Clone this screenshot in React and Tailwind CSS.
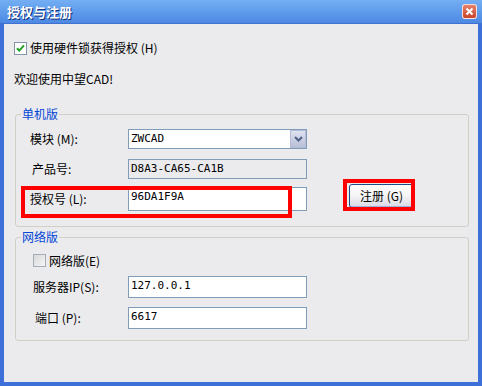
import React from "react";

const cjk = { fontFamily: '"Noto Sans CJK SC", "Noto Sans", sans-serif' };
const mono = { fontFamily: '"DejaVu Sans Mono", "Liberation Mono", "Noto Sans CJK SC", monospace' };

function CheckBox({ checked }) {
  if (checked) {
    return (
      <div className="w-[13px] h-[13px] border border-[#8593a8] bg-white flex items-center justify-center">
        <svg width="11" height="11" viewBox="0 0 11 11">
          <path d="M2 5.2 L4.3 7.6 L9 2.4" stroke="#21a121" strokeWidth="2" fill="none" />
        </svg>
      </div>
    );
  }
  return <div className="w-[13px] h-[13px] border border-[#a7adb8] bg-gradient-to-br from-[#d8d8d8] to-[#f6f6f6]" />;
}

function Field({ value, h, readOnly }) {
  return (
    <div
      className={`w-[179px] border border-[#7f9db9] flex items-start pl-[2px] pt-[3px] text-[11px] leading-[12px] text-black ${readOnly ? "bg-[#ebebee]" : "bg-white"}`}
      style={{ ...mono, height: h }}
    >
      {value}
    </div>
  );
}

export default function App() {
  return (
    <div className="relative w-[482px] h-[386px] bg-[#3d70d8] flex flex-col overflow-hidden" style={cjk}>
      {/* title bar */}
      <div className="h-[24px] flex items-center justify-between bg-gradient-to-b from-[#74aef3] via-[#5f9cec] to-[#4d88e2] border-b border-[#3f72d0]">
        <span className="ml-[7px] text-[13px] font-bold text-white leading-none [text-shadow:1px_1px_0_#10307a]">授权与注册</span>
        <div className="mr-[5px] w-[15px] h-[15px] rounded-[3px] border border-white/80 bg-gradient-to-b from-[#e8806a] to-[#c8442a] flex items-center justify-center">
          <svg width="9" height="9" viewBox="0 0 9 9">
            <path d="M1.5 1.5 L7.5 7.5 M7.5 1.5 L1.5 7.5" stroke="white" strokeWidth="2" />
          </svg>
        </div>
      </div>

      {/* body */}
      <div className="flex-1 mx-[4px] mb-[4px] bg-[#ebebee] flex flex-col text-[12px] leading-[14px] text-black">
        <div className="mt-[17px] ml-[10px] flex items-center gap-[3px]">
          <CheckBox checked />
          <span>使用硬件锁获得授权 (H)</span>
        </div>
        <div className="mt-[17px] ml-[10px]">欢迎使用中望CAD!</div>

        {/* 单机版 */}
        <fieldset className="mt-[21px] ml-[11px] w-[454px] border border-[#d0d0c8] rounded-[3px] pl-[14px] pt-[8px] pb-[15px]">
          <legend className="-ml-[9px] px-[1px] text-[12px] leading-[14px] text-[#0046d5]">单机版</legend>
          <div className="flex items-center h-[20px]">
            <span className="w-[98px]">模块 (M):</span>
            <div className="w-[179px] h-[20px] border border-[#7f9db9] bg-white flex items-center justify-between">
              <span className="pl-[2px] text-[11px]" style={mono}>ZWCAD</span>
              <div className="w-[16px] h-[18px] bg-gradient-to-b from-[#dfe2f0] to-[#b9bfd8] border border-[#b5bcd6] flex items-center justify-center">
                <svg width="9" height="6" viewBox="0 0 9 6">
                  <path d="M1 1 L4.5 4.5 L8 1" stroke="#4d6185" strokeWidth="2" fill="none" />
                </svg>
              </div>
            </div>
          </div>
          <div className="flex items-center mt-[10px]">
            <span className="w-[98px] pl-[2px]">产品号:</span>
            <Field value="D8A3-CA65-CA1B" h={20} readOnly />
          </div>
          <div className="flex items-start mt-[8px]">
            <span className="w-[98px] mt-[5px]">授权号 (L):</span>
            <Field value="96DA1F9A" h={24} />
            <button
              className="ml-[42px] -mt-[3px] w-[65px] h-[24px] rounded-[3px] border border-[#1e4a86] bg-gradient-to-b from-white via-[#f4f4f4] to-[#d9d9e6] text-[12px] leading-none shadow-[inset_-1px_-1px_0_#9ab2dd]"
              style={cjk}
            >
              注册 (G)
            </button>
          </div>
        </fieldset>

        {/* 网络版 */}
        <fieldset className="mt-[3px] ml-[11px] w-[454px] border border-[#d0d0c8] rounded-[3px] pl-[17px] pt-[10px] pb-[11px]">
          <legend className="-ml-[12px] px-[1px] text-[12px] leading-[14px] text-[#0046d5]">网络版</legend>
          <div className="flex items-center gap-[3px] h-[13px]">
            <CheckBox />
            <span>网络版(E)</span>
          </div>
          <div className="flex items-center mt-[9px]">
            <span className="w-[95px]">服务器IP(S):</span>
            <Field value="127.0.0.1" h={22} />
          </div>
          <div className="flex items-center mt-[9px]">
            <span className="w-[95px] pl-[2px]">端口 (P):</span>
            <Field value="6617" h={22} />
          </div>
        </fieldset>
      </div>

      {/* red annotation boxes */}
      <div className="absolute left-[21px] top-[186px] w-[271px] h-[32px] border-4 border-[#ff0000]" />
      <div className="absolute left-[343px] top-[179px] w-[72px] h-[32px] border-4 border-[#ff0000]" />
    </div>
  );
}
